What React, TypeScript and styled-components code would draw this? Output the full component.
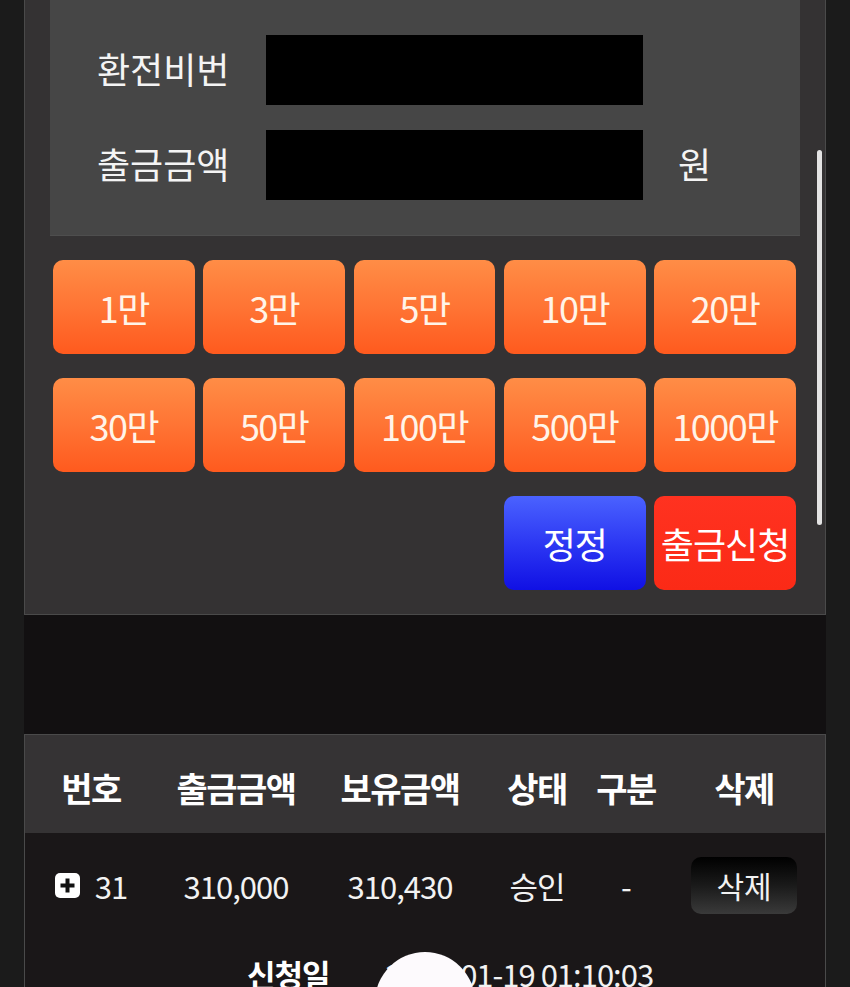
import React from 'react';
import styled, { createGlobalStyle } from 'styled-components';

const GlobalStyle = createGlobalStyle`
  html, body {
    margin: 0;
    padding: 0;
    background: #1b1b1b;
    font-family: "Noto Sans CJK KR", "Noto Sans", sans-serif;
    color: #fff;
  }
`;

const quickAmounts = ['1만', '3만', '5만', '10만', '20만', '30만', '50만', '100만', '500만', '1000만'];

const App: React.FC = () => {
  return (
    <>
      <GlobalStyle />
      <Page>
        <FormPanel>
          <FieldBox>
            <FieldRow>
              <FieldLabel>환전비번</FieldLabel>
              <FieldInput type='password' />
            </FieldRow>
            <FieldRow>
              <FieldLabel>출금금액</FieldLabel>
              <FieldInput type='text' />
              <Unit>원</Unit>
            </FieldRow>
          </FieldBox>
          <AmountGrid>
            {quickAmounts.map((amount) => (
              <AmountButton key={amount}>{amount}</AmountButton>
            ))}
            <ActionButton $tone='blue' style={{ gridColumn: 4 }}>
              정정
            </ActionButton>
            <ActionButton $tone='red'>출금신청</ActionButton>
          </AmountGrid>
        </FormPanel>
        <Spacer />
        <TablePanel>
          <HeaderRow>
            <HeadCell>번호</HeadCell>
            <HeadCell>출금금액</HeadCell>
            <HeadCell>보유금액</HeadCell>
            <HeadCell>상태</HeadCell>
            <HeadCell>구분</HeadCell>
            <HeadCell>삭제</HeadCell>
          </HeaderRow>
          <BodyRow>
            <Cell>
              <PlusIcon viewBox='0 0 25 25'>
                <rect x='0' y='0' width='25' height='25' rx='5' fill='#fff' />
                <path d='M12.5 5.5v14M5.5 12.5h14' stroke='#111' strokeWidth='4' />
              </PlusIcon>
              31
            </Cell>
            <Cell>310,000</Cell>
            <Cell>310,430</Cell>
            <Cell>승인</Cell>
            <Cell>-</Cell>
            <Cell>
              <DeleteButton>삭제</DeleteButton>
            </Cell>
          </BodyRow>
          <DetailRow>
            <DetailLabel>신청일</DetailLabel>
            <DetailValue>2023-01-19 01:10:03</DetailValue>
          </DetailRow>
        </TablePanel>
        <ScrollThumb />
        <TouchMark />
      </Page>
    </>
  );
};

const Page = styled.div`
  position: relative;
  width: 802px;
  margin: 0 24px;
  height: 987px;
  overflow: hidden;
`;

const FormPanel = styled.section`
  background: #343233;
  border: 1px solid #4a4a4a;
  border-top: none;
  padding: 0 25px 24px;
`;

const FieldBox = styled.div`
  background: #464646;
  border-bottom: 1px solid #4e4e4e;
  padding: 35px 0 35px;
  display: flex;
  flex-direction: column;
  gap: 25px;
`;

const FieldRow = styled.div`
  display: flex;
  align-items: center;
`;

const FieldLabel = styled.label`
  width: 169px;
  padding-left: 47px;
  font-size: 36px;
  line-height: 1;
  color: #f4f4f4;
  margin-top: -4px;
`;

const FieldInput = styled.input`
  width: 377px;
  height: 70px;
  box-sizing: border-box;
  background: #000;
  border: none;
  outline: none;
  color: #fff;
  font-size: 28px;
`;

const Unit = styled.span`
  margin-left: 35px;
  font-size: 36px;
  color: #f4f4f4;
  margin-top: -4px;
`;

const AmountGrid = styled.div`
  display: grid;
  grid-template-columns: repeat(5, 1fr);
  column-gap: 8.5px;
  row-gap: 24px;
  padding: 24px 4px 0 3px;
`;

const AmountButton = styled.button`
  height: 94px;
  border: none;
  border-radius: 10px;
  background: linear-gradient(to bottom, #ff8d46 0%, #ff7434 50%, #ff5a1e 100%);
  color: #fff4e8;
  font-family: "Noto Sans CJK KR", sans-serif;
  font-size: 36px;
  letter-spacing: -1.5px;
  padding: 0;
  cursor: pointer;
`;

const ActionButton = styled.button<{ $tone: 'blue' | 'red' }>`
  height: 94px;
  border: none;
  border-radius: 10px;
  background: ${({ $tone }) =>
    $tone === 'blue'
      ? 'linear-gradient(to bottom, #4a62ff 0%, #2a34f2 55%, #1010e4 100%)'
      : 'linear-gradient(to bottom, #ff3220 0%, #fb2a16 100%)'};
  color: #fff;
  font-family: "Noto Sans CJK KR", sans-serif;
  font-size: 36px;
  letter-spacing: -1px;
  padding: 0;
  cursor: pointer;
`;

const Spacer = styled.div`
  height: 119px;
  background: #121011;
`;

const TablePanel = styled.section`
  border: 1px solid #4a4a4a;
  border-bottom: none;
  background: #1a1718;
`;

const HeaderRow = styled.div`
  display: grid;
  grid-template-columns: 132px 158px 170px 104px 74px 1fr;
  align-items: center;
  height: 98px;
  background: #353334;
`;

const HeadCell = styled.div`
  text-align: center;
  font-size: 34px;
  font-weight: 700;
  letter-spacing: -1.5px;
  padding-top: 6px;
`;

const BodyRow = styled.div`
  display: grid;
  grid-template-columns: 132px 158px 170px 104px 74px 1fr;
  align-items: center;
  height: 104px;
`;

const Cell = styled.div`
  display: flex;
  align-items: center;
  justify-content: center;
  gap: 15px;
  font-size: 31px;
  letter-spacing: -1px;
  color: #f2f2f2;
`;

const PlusIcon = styled.svg`
  width: 25px;
  height: 25px;
  flex-shrink: 0;
`;

const DeleteButton = styled.button`
  width: 106px;
  height: 57px;
  border: none;
  border-radius: 10px;
  background: linear-gradient(to bottom, #000 0%, #1a1a1a 50%, #3a3a3a 100%);
  color: #f2f2f2;
  font-family: "Noto Sans CJK KR", sans-serif;
  font-size: 30px;
  padding: 0;
`;

const DetailRow = styled.div`
  display: flex;
  align-items: center;
  gap: 56px;
  padding: 14px 0 20px 222px;
`;

const DetailLabel = styled.div`
  font-size: 31px;
  font-weight: 700;
  letter-spacing: -1px;
`;

const DetailValue = styled.div`
  font-size: 31px;
  letter-spacing: -1px;
  color: #f2f2f2;
`;

const ScrollThumb = styled.div`
  position: absolute;
  left: 793px;
  top: 150px;
  width: 5px;
  height: 375px;
  border-radius: 3px;
  background: #e4e4e4;
`;

const TouchMark = styled.div`
  position: absolute;
  left: 351px;
  top: 952px;
  width: 100px;
  height: 100px;
  border-radius: 50%;
  background: #fdfafd;
`;

export default App;
